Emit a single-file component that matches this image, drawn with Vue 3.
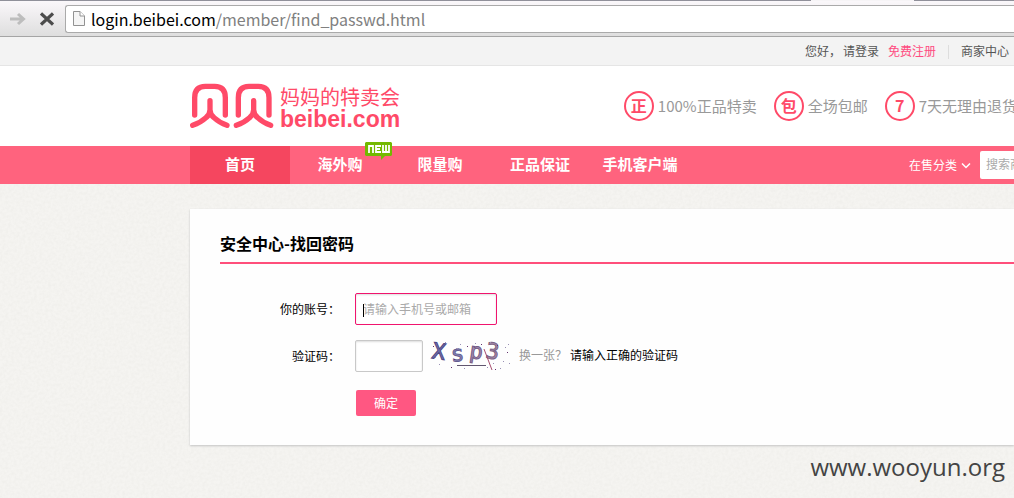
<script setup>
import { ref } from 'vue'

const account = ref('')
const code = ref('')
const navItems = [
  { label: '首页', active: true },
  { label: '海外购', fresh: true },
  { label: '限量购' },
  { label: '正品保证' },
  { label: '手机客户端' }
]
const promises = [
  { mark: '正', text: '100%正品特卖' },
  { mark: '包', text: '全场包邮' },
  { mark: '7', text: '7天无理由退货' }
]
const dots = [
  [4, 6], [10, 24], [16, 2], [22, 27], [27, 8], [31, 4], [38, 6], [43, 22], [46, 3], [52, 4],
  [58, 27], [64, 23], [68, 5], [71, 28], [74, 21], [78, 12], [79, 4], [80, 23], [66, 29], [35, 28],
  [6, 17], [25, 19], [76, 7], [61, 2]
]
</script>

<template>
  <div class="screen">
    <div class="browser">
      <div class="tabs"><span class="tab"></span></div>
      <div class="toolbar">
        <button class="tool" type="button" aria-label="前进">
          <svg width="16" height="14" viewBox="0 0 16 14"><path d="M0 7H13M8 2l5.500 5L8 12" fill="none" stroke="#bdbdbd" stroke-width="3" /></svg>
        </button>
        <button class="tool" type="button" aria-label="停止">
          <svg width="14" height="14" viewBox="0 0 14 14"><path d="M1 1.500L13 12.500M13 1.500L1 12.500" stroke="#4c4c4c" stroke-width="3.200" /></svg>
        </button>
        <div class="address">
          <svg width="12" height="15" viewBox="0 0 12 15"><path d="M.5.5H7L11.500 5V14.500H.5Z" fill="#f5f5f5" stroke="#929292" /><path d="M7 .5V5H11.500" fill="#fff" stroke="#929292" /></svg>
          <span class="url"><b>login.beibei.com</b>/member/find_passwd.html</span>
        </div>
      </div>
    </div>

    <div class="topbar">
      <span>您好，</span>
      <a class="login" href="#">请登录</a>
      <a class="register" href="#">免费注册</a>
      <a class="merchant" href="#">商家中心</a>
    </div>

    <header class="header">
      <a class="logo" href="#">
        <svg width="84" height="46" viewBox="0 0 252 138" fill="none" stroke="#ff4a68" stroke-width="16" stroke-linecap="round">
          <g id="shell">
            <path d="M14 96V44Q14 10 46 10H74Q106 10 106 44V96" />
            <path d="M60 53V80Q60 94 48 104Q32 119 8 127M60 80Q60 94 72 104Q88 119 111 127" />
          </g>
          <use href="#shell" x="131" />
        </svg>
        <span class="brand"><span class="slogan">妈妈的特卖会</span><span class="domain">beibei.com</span></span>
      </a>
      <ul class="promises">
        <li v-for="p in promises" :key="p.mark"><i>{{ p.mark }}</i><span>{{ p.text }}</span></li>
      </ul>
    </header>

    <nav class="nav">
      <a v-for="n in navItems" :key="n.label" href="#" class="nav-item" :class="{ active: n.active }">
        {{ n.label }}
        <svg v-if="n.fresh" class="badge" width="27" height="18" viewBox="0 0 27 18" role="img" aria-label="NEW">
          <path d="M1 0H26L27 1V13L26 14H20L16 18V14H1L0 13V1Z" fill="#73b900" />
          <path d="M4 11V4H8V11M16 4H11V10H16M11 7H15M18 3V10H24V3M21 3V10" fill="none" stroke="#fff" stroke-width="1.800" />
        </svg>
      </a>
      <div class="nav-right">
        <button class="category" type="button">在售分类
          <svg width="10" height="6" viewBox="0 0 10 6"><path d="M1 .5L5 4.500L9 .5" fill="none" stroke="#fff" stroke-width="1.500" /></svg>
        </button>
        <input class="search" type="text" placeholder="搜索商品" aria-label="搜索商品" />
      </div>
    </nav>

    <main class="main">
      <svg class="paper" aria-hidden="true">
        <filter id="grain"><feTurbulence type="fractalNoise" baseFrequency="0.35" numOctaves="3" /><feColorMatrix values="0 0 0 0 .5  0 0 0 0 .5  0 0 0 0 .45  .16 0 0 0 -.05" /></filter>
        <rect width="100%" height="100%" filter="url(#grain)" />
      </svg>
      <section class="card">
        <h1>安全中心-找回密码</h1>
        <form @submit.prevent>
          <div class="row">
            <label for="account">你的账号：</label>
            <div class="field">
              <input id="account" v-model="account" class="account" type="text" placeholder="请输入手机号或邮箱" />
              <span class="caret"></span>
            </div>
          </div>
          <div class="row">
            <label for="code">验证码：</label>
            <input id="code" v-model="code" class="code" type="text" />
            <svg class="captcha" width="84" height="32" viewBox="0 0 84 32">
              <g class="glyphs">
                <text x="3" y="19" transform="rotate(8 10 14)" fill="#7775ad" stroke="#4d4785">X</text>
                <text x="22" y="21" transform="rotate(-5 31 16)" fill="#8a86b5" stroke="#655c91">s</text>
                <text x="40" y="19" transform="rotate(8 48 16)" fill="#a28bb0" stroke="#735b86">p</text>
                <text x="57" y="19" transform="rotate(8 66 12)" fill="#a58cac" stroke="#7b6384">3</text>
              </g>
              <path d="M28 25.500H57" stroke="#61566f" />
              <path d="M55 9L63 30" stroke="#a74e70" />
              <rect v-for="(d, i) in dots" :key="i" :x="d[0]" :y="d[1]" width="1" height="1" :fill="i % 3 ? '#9990b5' : '#63306c'" />
            </svg>
            <a class="swap" href="#">换一张？</a>
            <span class="hint">请输入正确的验证码</span>
          </div>
          <button class="submit" type="submit">确定</button>
        </form>
      </section>
      <p class="watermark">www.wooyun.org</p>
    </main>
  </div>
</template>

<style>
body { margin: 0; overflow: hidden; }
</style>

<style scoped>
* { box-sizing: border-box; }
a { text-decoration: none; color: inherit; }
button, input { font: inherit; outline: none; }
.screen {
  display: flex;
  flex-direction: column;
  min-height: 100vh;
  overflow: hidden;
  white-space: nowrap;
  font: 12px/18px "Liberation Sans", "Noto Sans CJK SC", sans-serif;
  color: #000;
}
.browser { border-bottom: 1px solid #a5a5a5; background: linear-gradient(#fbf8fb, #dedede); }
.tabs { height: 1px; background: #90909a; }
.tab { display: block; width: 103px; height: 1px; margin-left: 80%; background: #f6f4f6; }
.toolbar { display: flex; align-items: center; height: 35px; padding-left: 10px; }
.tool { display: flex; padding: 0; border: 0; background: none; }
.tool + .tool { margin-left: 14px; }
.address {
  display: flex;
  flex: 1;
  align-items: center;
  gap: 6px;
  height: 28px;
  margin-left: 11px;
  padding-left: 7px;
  border: 1px solid #aaa;
  border-right: 0;
  border-radius: 3px 0 0 3px;
  background: #fff;
}
.url { font: 16px/24px "Noto Sans CJK SC", sans-serif; color: #808080; }
.url b { font-weight: 400; color: #000; }

.topbar {
  display: flex;
  align-items: center;
  justify-content: flex-end;
  height: 29px;
  padding: 1px 5px 0 0;
  border-bottom: 1px solid #e5e5e5;
  background: #f3f3f3;
  color: #555;
}
.login { margin-left: 2px; }
.register { margin-left: 9px; color: #ff4a80; }
.merchant { margin-left: 12px; padding-left: 12px; border-left: 1px solid #ddd; line-height: 14px; }

.header { display: flex; align-items: center; height: 80px; padding-left: 190px; background: #fff; }
.logo { display: flex; align-items: center; gap: 6px; color: #ff4a68; }
.brand { display: flex; flex-direction: column; padding-top: 2px; }
.slogan { font: 20px/24px "Noto Sans CJK SC", sans-serif; }
.domain { font: bold 23px/20px "Liberation Sans", sans-serif; }
.promises {
  display: flex;
  flex: 1;
  justify-content: flex-end;
  gap: 17px;
  margin: 0 -3px 0 0;
  padding: 0;
  list-style: none;
  color: #999;
  font: 15px/20px "Noto Sans CJK SC", sans-serif;
}
.promises li { display: flex; align-items: center; gap: 4px; }
.promises i {
  width: 30px;
  height: 30px;
  border: 2px solid #ff4a68;
  border-radius: 50%;
  font: bold 16px/25px "Noto Sans CJK SC", sans-serif;
  color: #ff4a68;
  text-align: center;
}

.nav { display: flex; height: 38px; padding-left: 190px; background: #ff637e; color: #fff; }
.nav-item {
  position: relative;
  flex: none;
  width: 100px;
  text-align: center;
  font: bold 15px/36px "Noto Sans CJK SC", sans-serif;
}
.active { background: #f5465f; }
.badge { position: absolute; top: -4px; right: -2px; }
.nav-right { display: flex; flex: 1; align-items: center; justify-content: flex-end; gap: 9px; overflow: hidden; }
.category { display: flex; align-items: center; gap: 4px; padding: 2px 0 0; border: 0; background: none; color: #fff; }
.search { width: 34px; height: 28px; padding: 0 0 0 6px; border: 0; border-radius: 2px 0 0 2px; background: #fff; }
input::placeholder { color: #aaa; opacity: 1; }

.main { position: relative; flex: 1; padding: 25px 0 0 190px; background: #f5f4f1; }
.paper { position: absolute; inset: 0; width: 100%; height: 100%; }
.card { position: relative; padding: 20px 0 29px 30px; background: #fefefe; box-shadow: 0 1px 2px #c4c4c4; }
h1 { margin: 0; padding-bottom: 5px; border-bottom: 2px solid #ff4f7b; font: bold 16px/28px "Noto Sans CJK SC", sans-serif; }
form { padding-top: 29px; }
.row { display: flex; align-items: center; height: 32px; margin-bottom: 15px; }
label { width: 120px; margin-right: 15px; padding-top: 2px; text-align: right; }
.field { position: relative; display: flex; }
.account, .code { height: 32px; padding: 2px 7px 0; border: 1px solid #c8c8c8; border-radius: 2px; background: #fff; box-shadow: inset 0 1px 2px #ddd; }
.account { width: 142px; border-color: #f0146e; }
.caret { position: absolute; left: 8px; top: 11px; width: 1px; height: 13px; background: #000; }
.code { width: 68px; }
.captcha { margin-left: 6px; overflow: visible; }
.glyphs { font: 22px "DejaVu Sans Mono", monospace; }
.swap { margin-left: 6px; color: #999; }
.hint { margin-left: 3px; }
.submit {
  display: block;
  width: 60px;
  height: 26px;
  margin: 18px 0 0 136px;
  padding: 2px 0 0;
  border: 0;
  border-radius: 2px;
  background: #ff5782;
  color: #fff;
}
.watermark { position: relative; margin: 0; padding: 5px 9px 0 0; text-align: right; font: 24px/34px "Open Sans", "Noto Sans", sans-serif; color: #444; }
</style>
